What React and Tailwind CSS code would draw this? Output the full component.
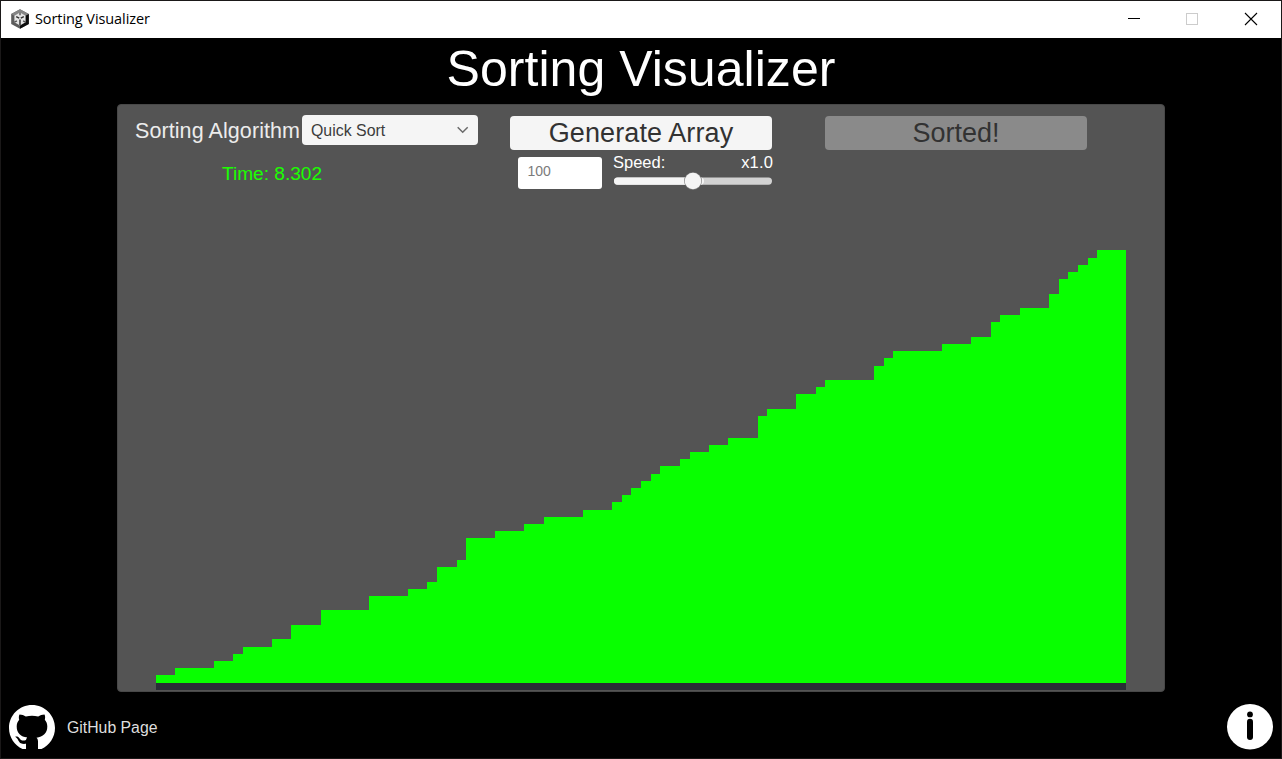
import React from "react";

// Runs of equal bars in the sorted array: [width, height].
const RUNS = [
  [19, 8], [39, 15], [19, 22], [10, 29], [29, 36], [19, 44], [30, 58], [48, 73],
  [39, 87], [19, 94], [10, 101], [20, 116], [9, 123], [29, 145], [29, 152],
  [20, 159], [39, 166], [29, 173], [10, 181], [9, 188], [10, 195], [10, 202],
  [9, 209], [20, 217], [10, 224], [19, 231], [19, 238], [30, 245], [9, 267],
  [29, 274], [20, 289], [9, 296], [49, 303], [10, 317], [9, 325], [49, 332],
  [29, 339], [20, 346], [9, 361], [20, 368], [29, 375], [10, 389], [9, 404],
  [10, 411], [10, 418], [9, 425], [29, 433],
];

function AppIcon() {
  return (
    <svg width="20" height="20" viewBox="0 0 20 20">
      <path d="M10 0.3 18.8 5v10L10 19.7 1.2 15V5z" fill="#5c5c5c" />
      <path d="M10 0.3 18.8 5 10 10 1.2 5z" fill="#858585" />
      <path d="M18.8 5v10L10 19.7V10z" fill="#0c0c0c" />
      <path d="M10 3.6 15.600 6.800v6.400L10 16.400 4.400 13.200V6.800z" fill="#e4e4e4" />
      <path d="M10 10.500v5.500M9.200 9.200 6.200 7.600M10.800 9.200l3-1.600" stroke="#333" strokeWidth="1.500" />
      <path d="M10 3.500v2.800M4.400 13.200l2.500-1.400M15.600 13.200l-2.500-1.400" stroke="#555" strokeWidth="1.400" />
    </svg>
  );
}

function TitleBar() {
  return (
    <div className="flex h-[37px] shrink-0 items-center bg-white pl-[9px]">
      <div className="-mt-[2px]">
        <AppIcon />
      </div>
      <span className="ml-[5px] flex-1 whitespace-nowrap font-['Open_Sans',sans-serif] text-[14.5px] leading-none tracking-[-0.08px] text-black">
        Sorting Visualizer
      </span>
      <svg width="153" height="37" viewBox="0 0 153 37" shapeRendering="crispEdges">
        <path d="M0 17.5h12" stroke="#000" />
        <rect x="58.5" y="12.5" width="11" height="11" fill="none" stroke="#ccc" />
        <path d="M117 12 129 24M129 12 117 24" stroke="#000" shapeRendering="auto" strokeWidth="1.1" />
      </svg>
    </div>
  );
}

function Controls() {
  return (
    <div className="flex h-[90px] shrink-0 items-start">
      <div className="flex w-[393px] shrink-0 flex-col pl-[18px] pt-[11px]">
        <div className="flex h-[30px] items-center">
          <span className="w-[167px] whitespace-nowrap pt-[3px] text-[21.5px] leading-none tracking-[0.08px] text-[#ececec]">Sorting Algorithm</span>
          <div className="flex h-[30px] w-[176px] items-center justify-between rounded-[4px] bg-[#f5f5f5] pl-[9px] pr-[9px]">
            <span className="pt-[2px] text-[15.9px] leading-none text-[#3c3c3c]">Quick Sort</span>
            <svg width="12" height="8" viewBox="0 0 12 8" fill="none" stroke="#6a6a6a" strokeWidth="1.5">
              <path d="M0.700 1.2 5.700 6.2 10.700 1.2" />
            </svg>
          </div>
        </div>
        <span className="ml-[87px] mt-[19px] whitespace-nowrap text-[19.1px] leading-none text-[#1bff00]">Time: 8.302</span>
      </div>
      <div className="flex w-[315px] shrink-0 flex-col pt-[12px]">
        <div className="flex h-[34px] w-[262px] items-center justify-center rounded-[4px] bg-[#f5f5f5]">
          <span className="whitespace-nowrap text-[27px] leading-none tracking-[0.1px] text-[#323232]">Generate Array</span>
        </div>
        <div className="mt-[7px] flex pl-[8px]">
          <div className="h-[32px] w-[84px] rounded-[3px] bg-white pl-[9.5px] pt-[7px] text-[14px] leading-none text-[#7b7b7b]">100</div>
          <div className="-mt-[3px] ml-[11px] flex w-[160px] flex-col">
            <div className="flex justify-between whitespace-nowrap text-[16.5px] leading-none text-white">
              <span>Speed:</span>
              <span className="tracking-[0.15px]">x1.0</span>
            </div>
            <svg className="ml-px mt-px" width="158" height="18" viewBox="0 0 158 18">
              <rect x="0" y="5.5" width="158" height="7.2" rx="3.6" fill="#d2d2d2" />
              <rect x="0" y="5.5" width="90" height="7.2" rx="3.6" fill="#f5f5f5" />
              <circle cx="79" cy="9" r="8.9" fill="#777" />
              <circle cx="79" cy="9" r="8.3" fill="#f5f5f5" />
            </svg>
          </div>
        </div>
      </div>
      <div className="mt-[12px] flex h-[34px] w-[262px] items-center justify-center rounded-[4px] bg-[#8a8a8a]">
        <span className="text-[27px] leading-none text-[#323232]">Sorted!</span>
      </div>
    </div>
  );
}

function GithubMark() {
  return (
    <svg className="mt-[2px]" width="46" height="46" viewBox="0 0 46 46">
      <path
        fill="#fff"
        d="M17 44H13.500C5.600 40.400 0 32.400 0 23 0 10.300 10.300 0 23 0s23 10.300 23 23c0 9.400-5.600 17.400-13.500 21H29V37c0-2-.3-3.200-1.500-4.300C34 31.600 38.300 28.500 38.300 21.500c0-2.800-.9-5-2.500-6.800.5-1.600.5-3.700-.3-5.200-2.300 0-4.500.7-6.300 2a24 24 0 0 0-12.400 0C15 10.200 12.800 9.500 10.500 9.500c-.8 1.500-.8 3.600-.3 5.200-1.600 1.800-2.500 4-2.500 6.800 0 7 4.300 10.100 10.500 11-.7.7-1.100 1.500-1.200 2.600-3.300 1.200-5.300.2-6.600-1.800-.9-1.400-2.200-2-4.200-1.600 2.900 1.500 3 5.100 5.600 6.500 1.500.8 3.200.9 5.200.6z"
      />
    </svg>
  );
}

function InfoIcon() {
  return (
    <svg width="46" height="46" viewBox="0 0 46 46">
      <ellipse cx="23" cy="22.700" rx="23" ry="22.700" fill="#fff" />
      <circle cx="23" cy="10.400" r="2.900" fill="#000" />
      <path d="M23 17.700v15.300" stroke="#000" strokeWidth="6" strokeLinecap="round" />
    </svg>
  );
}

export default function App() {
  return (
    <div className="flex h-[759px] w-[1282px] flex-col overflow-hidden border border-[#1a1818] bg-black font-['Liberation_Sans',Arial,sans-serif]">
      <TitleBar />
      <h1 className="flex h-[66px] shrink-0 items-center justify-center whitespace-nowrap pb-[4px] text-[50px] font-normal leading-none tracking-[0.04px] text-white">
        Sorting Visualizer
      </h1>
      <main className="ml-[116px] flex h-[588px] w-[1048px] shrink-0 flex-col rounded-[4px] border border-[#484848] bg-[#545454] bg-clip-border">
        <div className="-ml-px -mt-px">
          <Controls />
        </div>
        <div className="mb-px ml-[38px] mt-auto w-[970px] border-b-[7px] border-[#2a2e36]">
          <div className="flex h-[433px] items-end">
            {RUNS.map(([width, height], i) => (
              <div key={i} className="shrink-0 bg-[#08ff00]" style={{ width, height }} />
            ))}
          </div>
        </div>
      </main>
      <footer className="flex flex-1 items-center justify-between pl-[8px] pr-[8px] pt-[3px]">
        <div className="flex items-center gap-[12px]">
          <GithubMark />
          <span className="pt-[2px] text-[15.8px] leading-none text-[#dedede]">GitHub Page</span>
        </div>
        <InfoIcon />
      </footer>
    </div>
  );
}
